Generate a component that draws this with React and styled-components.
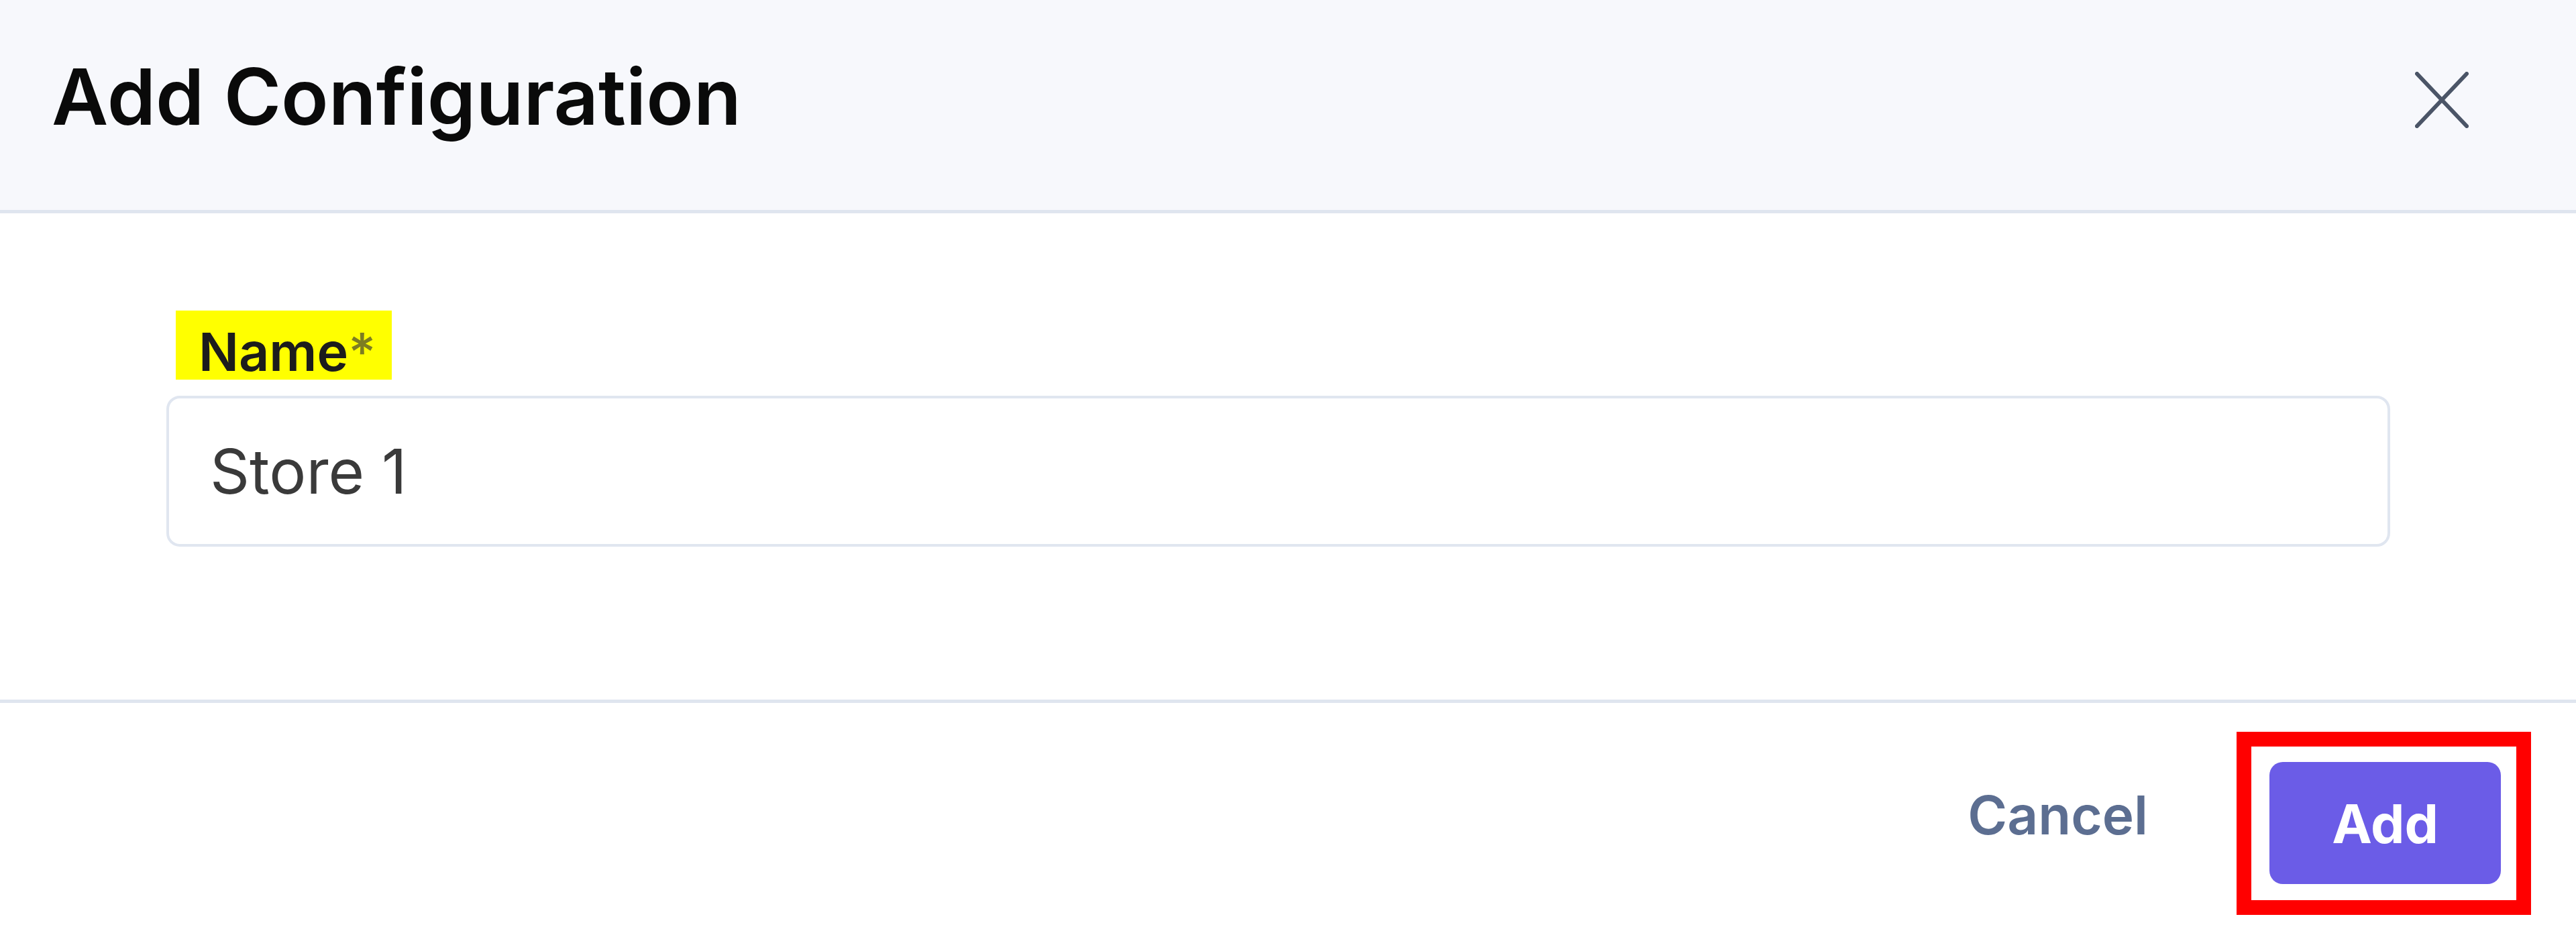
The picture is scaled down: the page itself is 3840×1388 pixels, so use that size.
import React, { useState } from 'react';
import styled, { createGlobalStyle } from 'styled-components';

const GlobalStyle = createGlobalStyle`
  html, body {
    margin: 0;
    padding: 0;
    background: #ffffff;
  }
  body {
    font-family: Inter, "Noto Sans", "Liberation Sans", sans-serif;
    -webkit-font-smoothing: antialiased;
  }
  * {
    box-sizing: border-box;
  }
`;

const CloseIcon = () => (
  <svg width="80" height="84" viewBox="0 0 80 84" fill="none">
    <path
      d="M3 3 L77 81 M77 3 L3 81"
      stroke="#4b5567"
      strokeWidth="6"
      strokeLinecap="round"
    />
  </svg>
);

const AddConfigurationModal = () => {
  const [name, setName] = useState('Store 1');

  return (
    <Modal>
      <Header>
        <Title>Add Configuration</Title>
        <CloseButton aria-label="Close">
          <CloseIcon />
        </CloseButton>
      </Header>

      <Body>
        <Label htmlFor="config-name">
          Name<Required>*</Required>
        </Label>
        <Input
          id="config-name"
          value={name}
          onChange={(e) => setName(e.target.value)}
        />
      </Body>

      <Footer>
        <CancelButton>Cancel</CancelButton>
        <Highlight>
          <PrimaryButton>Add</PrimaryButton>
        </Highlight>
      </Footer>
    </Modal>
  );
};

const Modal = styled.div`
  width: 3840px;
  height: 1388px;
  display: flex;
  flex-direction: column;
  background: #ffffff;
  overflow: hidden;
`;

const Header = styled.div`
  height: 318px;
  display: flex;
  align-items: center;
  justify-content: space-between;
  padding: 0 160px 26px 77px;
  background: #f7f8fc;
  border-bottom: 5px solid #dfe5ef;
`;

const Title = styled.h2`
  margin: 0;
  font-size: 116px;
  font-weight: 600;
  line-height: 1;
  color: #0a0a0a;
`;

const CloseButton = styled.button`
  display: flex;
  align-items: center;
  justify-content: center;
  padding: 0;
  margin-top: 10px;
  border: none;
  background: transparent;
  cursor: pointer;
`;

const Body = styled.div`
  display: flex;
  flex-direction: column;
  align-items: flex-start;
  padding: 145px 277px 228px 248px;
`;

const Label = styled.label`
  display: inline-block;
  margin-left: 14px;
  margin-bottom: 24px;
  padding: 22px 24px 0 34px;
  height: 103px;
  background: #ffff00;
  font-size: 79px;
  font-weight: 600;
  line-height: 79px;
  color: #1c1c1c;
`;

const Required = styled.span`
  color: #7d7d22;
  font-weight: 500;
`;

const Input = styled.input`
  width: 100%;
  height: 225px;
  padding: 0 40px 0 61px;
  border: 4px solid #e0e6f0;
  border-radius: 20px;
  background: #ffffff;
  font-family: inherit;
  font-size: 92px;
  color: #3a3a3a;
  outline: none;
`;

const Footer = styled.div`
  flex: 1;
  display: flex;
  align-items: flex-start;
  justify-content: flex-end;
  gap: 132px;
  padding: 43px 67px 0 0;
  border-top: 5px solid #dfe5ef;
`;

const CancelButton = styled.button`
  align-self: center;
  margin-top: -50px;
  padding: 0;
  border: none;
  background: transparent;
  font-family: inherit;
  font-size: 80px;
  font-weight: 600;
  color: #5c6e91;
  cursor: pointer;
`;

const Highlight = styled.div`
  border: 22px solid #ff0000;
  padding: 23px 23px 24px 27px;
`;

const PrimaryButton = styled.button`
  display: flex;
  align-items: center;
  justify-content: center;
  width: 345px;
  height: 182px;
  border: none;
  border-radius: 20px;
  background: #6b5ce7;
  font-family: inherit;
  font-size: 80px;
  font-weight: 700;
  color: #ffffff;
  cursor: pointer;
`;

const App = () => (
  <>
    <GlobalStyle />
    <AddConfigurationModal />
  </>
);

export default App;
